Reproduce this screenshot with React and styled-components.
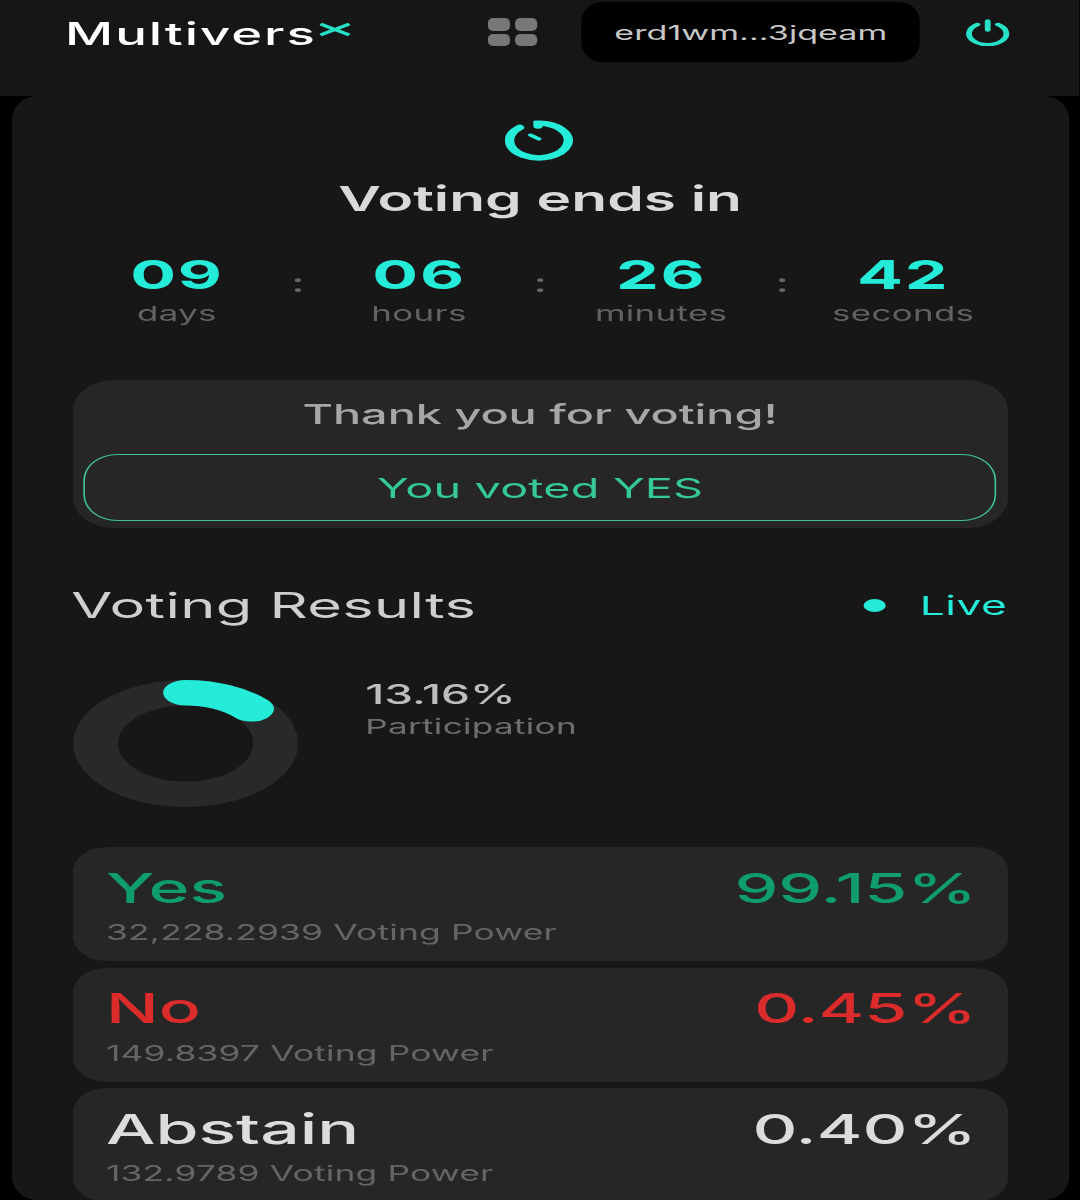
import React from "react";
import styled, { createGlobalStyle } from "styled-components";

const Global = createGlobalStyle`
  html, body { margin: 0; padding: 0; background: #000; height: 1200px; overflow: hidden; }
  body { font-family: Inter, "Liberation Sans", sans-serif; }
`;

/* The reference is a phone screenshot stretched sideways: the page is laid out
   at 635px wide and widened by 1.7 as a whole. */
const Stage = styled.div`
  width: 635.3px;
  height: 1200px;
  transform: scaleX(1.7);
  transform-origin: 0 0;
  overflow: hidden;
`;

const Header = styled.header`
  height: 96px;
  background: #161616;
  display: flex;
  align-items: flex-start;
  padding-left: 38.3px;
  box-sizing: border-box;
`;

const Logo = styled.div`
  display: flex;
  align-items: flex-start;
  width: 248.7px;
  margin-top: 15px;
  color: #fff;
  font-size: 31px;
  line-height: 37px;
  font-weight: 500;
  letter-spacing: 1.15px;
`;

const LogoMark = styled.svg`
  width: 18px;
  height: 15px;
  margin: 8px 0 0 1.5px;
  flex: none;
`;

const Apps = styled.div`
  display: grid;
  grid-template-columns: 13px 13px;
  grid-auto-rows: 12.5px;
  gap: 3px 3.4px;
  margin-top: 18px;
  width: 55.2px;
`;

const AppTile = styled.span`
  background: #777;
  border-radius: 3px / 5px;
`;

const Address = styled.div`
  width: 199px;
  height: 60px;
  margin-top: 2px;
  padding-top: 2px;
  box-sizing: border-box;
  background: #000;
  border-radius: 12px / 20px;
  display: flex;
  align-items: center;
  justify-content: center;
  color: #c8c8c8;
  font-size: 20px;
  letter-spacing: 0.05px;
`;

const PowerIcon = styled.svg`
  width: 26px;
  height: 30px;
  margin: 15.5px 0 0 27px;
`;

const Card = styled.main`
  margin-left: 6.5px;
  width: 622.4px;
  height: 1104px;
  background: #171717;
  border-radius: 15px / 24px;
  padding: 24px 36.4px 0;
  box-sizing: border-box;
`;

const ClockIcon = styled.svg`
  display: block;
  width: 41px;
  height: 41px;
  margin: 0 auto;
`;

const Title = styled.h1`
  margin: 15px 0 0;
  text-align: center;
  color: #d9d9d9;
  font-size: 34.5px;
  line-height: 46px;
  font-weight: 600;
`;

const Countdown = styled.div`
  display: flex;
  margin: 32px -10px 0;
`;

const Unit = styled.div`
  flex: 1;
  text-align: center;
`;

const Colon = styled.div`
  width: 0;
  display: flex;
  justify-content: center;
  padding-top: 14px;
  color: #666;
  font-size: 26px;
  line-height: 30px;
  font-weight: 500;
`;

const UnitValue = styled.div`
  color: #25ecd8;
  font-size: 40px;
  line-height: 42px;
  font-weight: 700;
  letter-spacing: 1px;
`;

const UnitLabel = styled.div`
  margin-top: 4px;
  color: #626262;
  font-size: 20.5px;
  line-height: 28px;
  letter-spacing: 0.2px;
`;

const ThanksPanel = styled.section`
  margin-top: 52px;
  height: 148px;
  background: #262626;
  border-radius: 24px / 30px;
  padding: 14px 6.5px 0;
  box-sizing: border-box;
`;

const ThanksText = styled.div`
  text-align: center;
  color: #a6a6a6;
  font-size: 27.5px;
  line-height: 40px;
  font-weight: 500;
`;

const VotedBox = styled.div`
  margin-top: 20px;
  height: 67px;
  box-sizing: border-box;
  border: 1.5px solid #3fbf98;
  border-radius: 20px / 26px;
  display: flex;
  align-items: center;
  justify-content: center;
  color: #35c99a;
  font-size: 27.5px;
  letter-spacing: 0.1px;
`;

const ResultsHead = styled.div`
  margin-top: 54px;
  height: 46px;
  display: flex;
  align-items: center;
  justify-content: space-between;
`;

const ResultsTitle = styled.h2`
  margin: 0 0 0 -1px;
  color: #cfcfcf;
  font-size: 35px;
  font-weight: 400;
  letter-spacing: 0.2px;
`;

const LiveTag = styled.div`
  display: flex;
  align-items: center;
  gap: 20px;
  color: #25ecd8;
  font-size: 26px;
  letter-spacing: 0.3px;
`;

const LiveDot = styled.span`
  width: 13px;
  height: 13px;
  border-radius: 50%;
  background: #25ecd8;
`;

const Participation = styled.div`
  margin-top: 52px;
  display: flex;
  gap: 39.6px;
`;

const Ring = styled.svg`
  width: 132.4px;
  height: 127px;
  flex: none;
`;

const ParticipationValue = styled.div`
  margin-top: -2px;
  color: #bdbdbd;
  font-size: 27px;
  line-height: 34px;
  font-weight: 500;
`;

const ParticipationLabel = styled.div`
  color: #6e6e6e;
  font-size: 20.6px;
  line-height: 30px;
  letter-spacing: 0.2px;
`;

const Options = styled.div`
  margin-top: 40px;
  display: flex;
  flex-direction: column;
  gap: 6.5px;
`;

const Option = styled.div`
  height: 114px;
  background: #262626;
  border-radius: 20px / 24px;
  padding: 14.5px 18px 0 19.5px;
  box-sizing: border-box;
`;

const OptionTop = styled.div`
  display: flex;
  justify-content: space-between;
  color: ${(p) => p.$color};
  font-size: 41px;
  line-height: 52px;
  font-weight: 500;
`;

const OptionPower = styled.div`
  margin-top: 4.5px;
  color: #656565;
  font-size: 20.8px;
  line-height: 30px;
  letter-spacing: 0.1px;
`;

const countdown = [
  ["09", "days"],
  ["06", "hours"],
  ["26", "minutes"],
  ["42", "seconds"],
];

const options = [
  { name: "Yes", pct: "99.15%", power: "32,228.2939", color: "#0f9d70" },
  { name: "No", pct: "0.45%", power: "149.8397", color: "#dc2b2b" },
  { name: "Abstain", pct: "0.40%", power: "132.9789", color: "#dcdcdc" },
];

export default function App() {
  return (
    <Stage>
      <Global />
      <Header>
        <Logo>
          Multivers
          <LogoMark viewBox="0 0 18 15" fill="none" stroke="#26e0c8" strokeWidth="3">
            <path d="M0.5 1 L17.5 12 M17.5 1 L0.5 12" />
          </LogoMark>
        </Logo>
        <Apps>
          <AppTile />
          <AppTile />
          <AppTile />
          <AppTile />
        </Apps>
        <Address>erd1wm...3jqeam</Address>
        <PowerIcon viewBox="0 0 26 30" fill="none" stroke="#26e0c8" strokeWidth="3.4" strokeLinecap="round">
          <path d="M13 5 V14" />
          <path d="M7 8.5 A11 11 0 1 0 19 8.5" />
        </PowerIcon>
      </Header>
      <Card>
        <ClockIcon viewBox="0 0 41 41" fill="none" stroke="#25ecd8" strokeWidth="5.5" strokeLinecap="round">
          <path d="M19.5 6 L19.5 3.3 A17.25 17.25 0 1 1 8.7 7.5" />
          <path d="M15 15 L20 19" strokeWidth="3" />
        </ClockIcon>
        <Title>Voting ends in</Title>
        <Countdown>
          {countdown.map(([value, label], i) => (
            <React.Fragment key={label}>
              {i > 0 && <Colon>:</Colon>}
              <Unit>
                <UnitValue>{value}</UnitValue>
                <UnitLabel>{label}</UnitLabel>
              </Unit>
            </React.Fragment>
          ))}
        </Countdown>
        <ThanksPanel>
          <ThanksText>Thank you for voting!</ThanksText>
          <VotedBox>You voted YES</VotedBox>
        </ThanksPanel>
        <ResultsHead>
          <ResultsTitle>Voting Results</ResultsTitle>
          <LiveTag>
            <LiveDot />
            Live
          </LiveTag>
        </ResultsHead>
        <Participation>
          <Ring viewBox="0 0 100 100" preserveAspectRatio="none" fill="none" strokeWidth="20">
            <circle cx="50" cy="50" r="40" stroke="#292929" />
            <path d="M50 10 A40 40 0 0 1 79.25 22.72" stroke="#25ecd8" strokeLinecap="round" />
          </Ring>
          <div>
            <ParticipationValue>13.16%</ParticipationValue>
            <ParticipationLabel>Participation</ParticipationLabel>
          </div>
        </Participation>
        <Options>
          {options.map((o) => (
            <Option key={o.name}>
              <OptionTop $color={o.color}>
                <span>{o.name}</span>
                <span>{o.pct}</span>
              </OptionTop>
              <OptionPower>{o.power} Voting Power</OptionPower>
            </Option>
          ))}
        </Options>
      </Card>
    </Stage>
  );
}
